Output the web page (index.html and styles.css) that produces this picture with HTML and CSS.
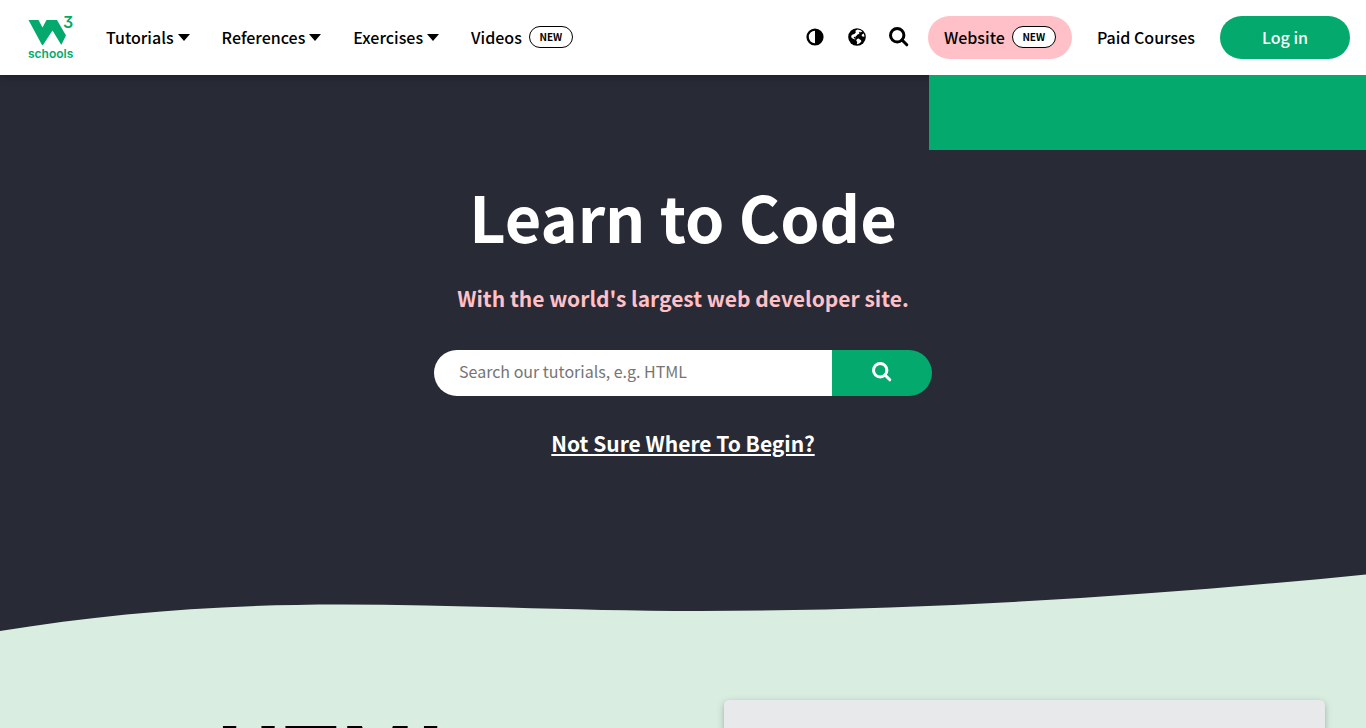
FILE: index.html
```html
<!DOCTYPE html>
<html lang="en">
<head>
  <meta charset="UTF-8">
  <meta name="viewport" content="width=device-width, initial-scale=1">
  <title>W3Schools Online Web Tutorials</title>
  <link rel="stylesheet" href="styles.css">
</head>
<body>

<header class="top-nav">
  <a class="logo" href="#" aria-label="W3Schools home">
    <svg width="46" height="46" viewBox="0 0 46 46">
      <path d="M0.5 5H10.5L14.5 12.5L18.5 5H29L38 20.5L33.5 29.500H33L24.5 15.500L15 30H14Z"/>
      <text class="logo-three" x="35" y="13">3</text>
      <text class="logo-name" x="0" y="43">schools</text>
    </svg>
  </a>
  <nav class="nav-left">
    <a class="nav-link" href="#">Tutorials <span class="caret"></span></a>
    <a class="nav-link" href="#">References <span class="caret"></span></a>
    <a class="nav-link" href="#">Exercises <span class="caret"></span></a>
    <a class="nav-link videos" href="#">Videos <span class="badge">NEW</span></a>
  </nav>
  <div class="nav-right">
    <button class="icon-btn" aria-label="Toggle dark mode">
      <svg width="18" height="18" viewBox="0 0 18 18">
        <circle cx="9" cy="9" r="7.4" fill="none" stroke="#000" stroke-width="2.4"/>
        <path d="M9 1.6A7.4 7.4 0 0 1 9 16.4Z"/>
      </svg>
    </button>
    <button class="icon-btn" aria-label="Translate">
      <svg width="18" height="18" viewBox="0 0 18 18">
        <circle cx="9" cy="9" r="8.8"/>
        <path fill="#fff" d="M9.4 1.5L12.6 2.2L14.2 3.6L12.6 4.4L12 3.4L10.8 4.8L11.6 6L9.8 6.2L8.6 7.8L7.6 8L7.8 9.4L6.4 8.8L5.6 9.6L6.4 10.4L7.4 10.6L7.2 11.4L5 10.8L3.2 9.2L3.4 7.6L4.6 6.4L6.4 6L7.8 4.6L7.4 2.8Z"/>
        <path fill="#fff" d="M9 10.9L10.6 10.6L13 12.2L13.4 13.2L12 15L9.6 16.3L8.8 15.8L9.2 14L8.2 12.6Z"/>
        <path fill="#fff" d="M14 6.4L15.8 5.6L16.5 8.4L15 8.8L13.6 7.8Z"/>
      </svg>
    </button>
    <button class="icon-btn" aria-label="Search W3Schools">
      <svg class="search-icon" width="20" height="20" viewBox="0 0 20 20">
        <circle cx="8.2" cy="8.2" r="6.7"/>
        <path d="M13 13L17.8 17.8"/>
      </svg>
    </button>
    <a class="pill website" href="#">Website <span class="badge">NEW</span></a>
    <a class="paid" href="#">Paid Courses</a>
    <a class="pill login" href="#">Log in</a>
  </div>
</header>

<main>
  <section class="hero">
    <div class="green-bar"></div>
    <h1>Learn to Code</h1>
    <h3>With the world's largest web developer site.</h3>
    <form class="search">
      <input type="text" aria-label="Search our tutorials" placeholder="Search our tutorials, e.g. HTML">
      <button type="button" aria-label="Search">
        <svg class="search-icon" width="20" height="20" viewBox="0 0 20 20">
          <circle cx="8.2" cy="8.2" r="6.7"/>
          <path d="M13 13L17.8 17.8"/>
        </svg>
      </button>
    </form>
    <a class="begin" href="#">Not Sure Where To Begin?</a>
  </section>

  <svg class="wave" viewBox="0 0 1366 60" preserveAspectRatio="none">
    <path d="M0 59C110 41 220 32.500 340 32.500C460 32.500 570 39 700 39C920 39 1150 24 1366 2.500V60H0Z"/>
  </svg>

  <section class="lesson">
    <div class="lesson-text">
      <h2>HTML</h2>
    </div>
    <div class="example-card"></div>
  </section>
</main>

</body>
</html>
```
FILE: styles.css
```css
* {
  box-sizing: border-box;
}

html, body {
  margin: 0;
  font-family: "Noto Sans CJK SC", "Noto Sans", sans-serif;
  font-size: 16px;
  line-height: 24px;
}

body {
  background: #d9eee1;
  color: #000;
}

/* the page scrolls without a visible bar */
html {
  scrollbar-width: none;
}

a {
  color: inherit;
  text-decoration: none;
}

button {
  border: 0;
  padding: 0;
  background: none;
  cursor: pointer;
}

svg {
  display: block;
}

/* top navigation */
.top-nav {
  position: relative;
  z-index: 2;
  display: flex;
  align-items: center;
  height: 75px;
  padding: 0 16px 0 28px;
  background: #fff;
  font-weight: 500;
  line-height: 22px;
  white-space: nowrap;
  box-shadow: 0 2px 5px rgba(0, 0, 0, 0.16), 0 2px 10px rgba(0, 0, 0, 0.12);
}

.logo {
  margin-right: 16px;
}

.logo svg {
  fill: #04aa6d;
  overflow: visible;
}

.logo text {
  font-family: Inter, sans-serif;
  font-weight: 600;
}

.logo-three {
  font-size: 16px;
  font-feature-settings: "cv09";
}

.logo-name {
  font-size: 12px;
}

.nav-left,
.nav-right {
  display: flex;
  align-items: center;
  padding-bottom: 1px;
}

.nav-right {
  margin-left: auto;
}

.nav-link {
  display: flex;
  align-items: center;
  gap: 4px;
  padding: 0 16px;
}

.nav-link.videos {
  gap: 7px;
}

.caret {
  border: 6px solid transparent;
  border-top: 7px solid #000;
  border-bottom: 0;
}

.badge {
  width: 44px;
  border: 1px solid #000;
  border-radius: 11px;
  background: #fff;
  font-size: 10px;
  font-weight: bold;
  line-height: 20px;
  text-align: center;
}

.icon-btn {
  display: flex;
  justify-content: center;
  width: 42px;
}

.search-icon {
  fill: none;
  stroke: #000;
  stroke-width: 3;
  stroke-linecap: round;
}

.pill {
  display: flex;
  align-items: center;
  justify-content: center;
  height: 43px;
  border-radius: 22px;
}

.website {
  gap: 7px;
  width: 144px;
  margin-left: 8px;
  background: #ffc0c7;
}

.paid {
  padding: 0 25px;
}

.login {
  width: 130px;
  background: #04aa6d;
  color: #fff;
}

/* hero */
.hero {
  display: flex;
  flex-direction: column;
  align-items: center;
  height: 497px;
  background: #282a35;
  color: #fff;
}

.green-bar {
  position: relative;
  z-index: 3;
  align-self: flex-end;
  width: 32%;
  height: 75px;
  background: #04aa6d;
}

.hero h1 {
  margin: 20px 0;
  font-size: 63px;
  line-height: 92px;
}

.hero h3 {
  margin: 0;
  color: #ffc0c7;
  font-size: 21px;
  line-height: 32px;
}

.search {
  display: flex;
  width: 498px;
  height: 46px;
  margin: 36px 0 31px;
}

.search input {
  flex: 1;
  min-width: 0;
  border: 0;
  border-radius: 23px 0 0 23px;
  padding: 0 25px 4px;
  font: inherit;
}

.search input::placeholder {
  color: #757575;
}

.search button {
  display: flex;
  align-items: center;
  justify-content: center;
  width: 100px;
  border-radius: 0 23px 23px 0;
  padding-bottom: 2px;
  background: #04aa6d;
}

.search button .search-icon {
  stroke: #fff;
}

.begin {
  font-size: 21px;
  font-weight: bold;
  line-height: 32px;
  text-decoration: underline;
}

.wave {
  width: 100%;
  height: 60px;
  background: #282a35;
  fill: #d9eee1;
}

/* lesson */
.lesson {
  display: grid;
  grid-template-columns: 1fr 1fr;
  padding: 68px 41px 0 0;
}

.lesson-text {
  padding-left: 20px;
  text-align: center;
}

.lesson h2 {
  margin: 0;
  font-size: 90px;
  line-height: 108px;
}

.example-card {
  height: 420px;
  margin-left: 61px;
  border-radius: 5px;
  background: #e7e9eb;
  box-shadow: 0 2px 5px rgba(0, 0, 0, 0.16), 0 2px 10px rgba(0, 0, 0, 0.12);
}
```
